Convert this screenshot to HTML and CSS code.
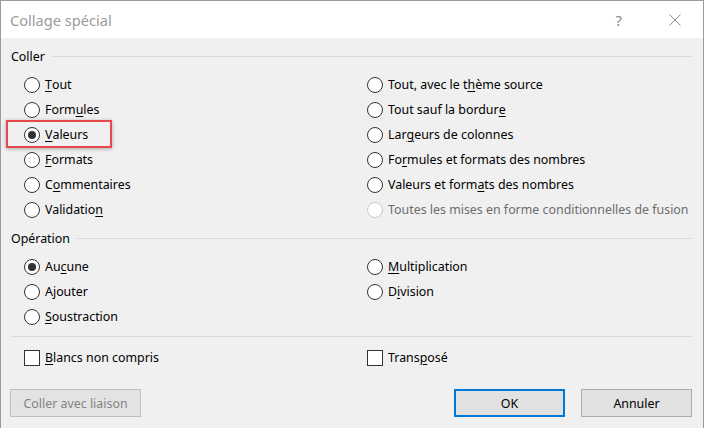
FILE: index.html
```html
<!DOCTYPE html>
<html lang="fr">
<head>
    <meta charset="UTF-8">
    <title>Collage spécial</title>
    <link rel="stylesheet" href="styles.css">
</head>
<body>
<div class="dialog">
    <div class="titlebar">
        <span class="title">Collage spécial</span>
        <span class="help">?</span>
        <svg class="close" width="12" height="12" viewBox="0 0 12 12">
            <path d="M0.5 0.5 L11.5 11.5 M11.5 0.5 L0.5 11.5" stroke="#8a8a8a" stroke-width="1" fill="none"/>
        </svg>
    </div>

    <div class="content">
        <div class="group-head"><span>Coller</span><div class="line"></div></div>
        <div class="cols cols-paste">
            <label class="opt"><span class="radio"></span><u>T</u>out</label>
            <label class="opt"><span class="radio"></span>Tout, avec le t<u>h</u>ème source</label>
            <label class="opt"><span class="radio"></span>Form<u>u</u>les</label>
            <label class="opt"><span class="radio"></span>Tout sauf la bordur<u>e</u></label>
            <label class="opt marked"><span class="radio checked"></span><u>V</u>aleurs<span class="highlight"></span></label>
            <label class="opt"><span class="radio"></span>Lar<u>g</u>eurs de colonnes</label>
            <label class="opt"><span class="radio"></span><u>F</u>ormats</label>
            <label class="opt"><span class="radio"></span>Fo<u>r</u>mules et formats des nombres</label>
            <label class="opt"><span class="radio"></span>C<u>o</u>mmentaires</label>
            <label class="opt"><span class="radio"></span>Valeurs et form<u>a</u>ts des nombres</label>
            <label class="opt"><span class="radio"></span>Validatio<u>n</u></label>
            <label class="opt disabled"><span class="radio"></span>Toutes les mises en forme conditionnelles de fusion</label>
        </div>

        <div class="group-head op"><span>Opération</span><div class="line"></div></div>
        <div class="cols cols-op">
            <label class="opt"><span class="radio checked"></span>Au<u>c</u>une</label>
            <label class="opt"><span class="radio"></span><u>M</u>ultiplication</label>
            <label class="opt"><span class="radio"></span>A<u>j</u>outer</label>
            <label class="opt"><span class="radio"></span>D<u>i</u>vision</label>
            <label class="opt"><span class="radio"></span><u>S</u>oustraction</label>
        </div>

        <div class="separator"></div>

        <div class="cols cols-check">
            <label class="opt"><span class="check"></span><u>B</u>lancs non compris</label>
            <label class="opt"><span class="check"></span>Trans<u>p</u>osé</label>
        </div>

        <div class="buttons">
            <button class="btn btn-link" disabled>Coller avec liaison</button>
            <div class="spacer"></div>
            <button class="btn btn-ok">OK</button>
            <button class="btn">Annuler</button>
        </div>
    </div>
</div>
</body>
</html>
```

FILE: styles.css
```css
body {
    margin: 0;
    font-family: "Noto Sans", "Open Sans", sans-serif;
    font-size: 12.4px;
    color: #000;
    background: #f0f0f0;
}
.dialog {
    width: 704px;
    height: 428px;
    box-sizing: border-box;
    border: 1px solid #9a9a9a;
    border-bottom: none;
    background: #f0f0f0;
}
.titlebar {
    height: 37px;
    background: #fff;
    display: flex;
    align-items: center;
    padding-left: 9px;
}
.title {
    font-size: 14.6px;
    color: #9b9b9b;
    flex: 1;
}
.help {
    font-size: 15px;
    color: #8a8a8a;
    margin-right: 47px;
}
.close {
    margin-right: 22px;
}
.content {
    padding: 8px 11px 0 10px;
}
.group-head {
    height: 20px;
    display: flex;
    align-items: center;
}
.group-head .line {
    flex: 1;
    height: 1px;
    background: #d9d9d9;
    margin-left: 7px;
}
.group-head.op {
    margin-top: 6px;
}
.cols {
    display: grid;
    grid-template-columns: 343px 1fr;
    padding-left: 13px;
}
.cols-paste,
.cols-op {
    margin-top: 6px;
}
.opt {
    height: 25px;
    display: flex;
    align-items: center;
    position: relative;
    white-space: nowrap;
}
.opt u {
    text-underline-offset: 2px;
}
.radio {
    width: 14px;
    height: 14px;
    border: 1px solid #333;
    border-radius: 50%;
    background: #fff;
    margin-right: 5px;
    position: relative;
    flex: none;
}
.radio.checked::after {
    content: "";
    position: absolute;
    left: 3px;
    top: 3px;
    width: 8px;
    height: 8px;
    border-radius: 50%;
    background: #333;
}
.disabled {
    color: #6d6d6d;
}
.disabled .radio {
    border-color: #c8c8c8;
    background: #fff;
}
.check {
    width: 14px;
    height: 14px;
    border: 1px solid #333;
    background: #fff;
    margin-right: 5px;
    flex: none;
}
.highlight {
    position: absolute;
    left: -18px;
    top: -2px;
    width: 102px;
    height: 24px;
    border: 2px solid #e8474c;
    box-shadow: 0 1px 4px rgba(0, 0, 0, 0.3);
}
.separator {
    height: 1px;
    background: #d9d9d9;
    margin: 7px 0 8px 0;
}
.cols-check {
    margin-bottom: 19px;
}
.buttons {
    display: flex;
    gap: 16px;
}
.spacer {
    flex: 1;
}
.btn {
    height: 28px;
    width: 111px;
    font-family: inherit;
    font-size: 12.4px;
    background: #e1e1e1;
    border: 1px solid #adadad;
    color: #000;
    padding: 0;
}
.btn-link {
    width: 131px;
    margin-left: -1px;
    color: #838383;
    border-color: #bfbfbf;
    background: #e3e3e3;
}
.btn-ok {
    border: 2px solid #0078d7;
}
```
